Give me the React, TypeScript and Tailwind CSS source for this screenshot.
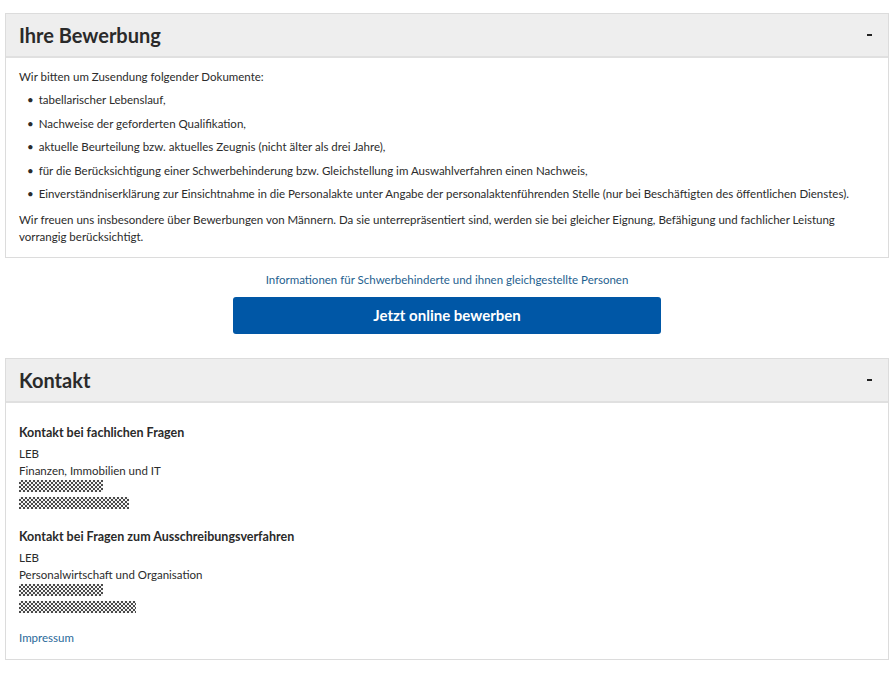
import React from 'react';

const font = { fontFamily: 'Lato, "Open Sans", "Noto Sans", sans-serif' };

function Redacted({ width }: { width: number }) {
  // masked contact line (phone / mail)
  return (
    <div
      className="h-[12px] bg-[repeating-conic-gradient(#4a4a4a_0_25%,#f4f4f4_0_50%)] bg-[length:4px_4px]"
      style={{ width }}
    />
  );
}

function Panel({ title, children }: { title: string; children: React.ReactNode }) {
  return (
    <section className="border border-[#dcdcdc] bg-white">
      <div className="flex h-[44px] items-center justify-between border-b-2 border-[#e0e0e0] bg-[#eeeeee] pl-[13px] pr-[16px]">
        <h2 className="text-[20px] font-bold text-[#2a2a2a]">{title}</h2>
        <span className="block h-[2px] w-[5px] bg-[#222]" />
      </div>
      {children}
    </section>
  );
}

const documents = [
  'tabellarischer Lebenslauf,',
  'Nachweise der geforderten Qualifikation,',
  'aktuelle Beurteilung bzw. aktuelles Zeugnis (nicht älter als drei Jahre),',
  'für die Berücksichtigung einer Schwerbehinderung bzw. Gleichstellung im Auswahlverfahren einen Nachweis,',
  'Einverständniserklärung zur Einsichtnahme in die Personalakte unter Angabe der personalaktenführenden Stelle (nur bei Beschäftigten des öffentlichen Dienstes).',
];

function ContactBlock({ heading, unit, widths }: { heading: string; unit: string; widths: number[] }) {
  return (
    <div>
      <h3 className="mb-[4px] text-[12.5px] font-bold leading-[17px] text-[#2a2a2a]">{heading}</h3>
      <p className="text-[11.5px] leading-[17px]">LEB</p>
      <p className="text-[11.5px] leading-[17px]">{unit}</p>
      <div className="mt-[1px] flex flex-col gap-[5px]">
        {widths.map((w, i) => (
          <Redacted key={i} width={w} />
        ))}
      </div>
    </div>
  );
}

export default function App() {
  return (
    <div className="min-h-[680px] bg-white pl-[5px] pr-[7px] pt-[13px] text-[#2b2b2b]" style={font}>
      <Panel title="Ihre Bewerbung">
        <div className="px-[13px] pb-[12px] pt-[10px] text-[11.5px] leading-[17px]">
          <p>Wir bitten um Zusendung folgender Dokumente:</p>
          <ul className="mt-[6px] flex flex-col gap-[6.5px] pl-[8px]">
            {documents.map((d) => (
              <li key={d} className="flex">
                <span className="mr-[5px]">•</span>
                <span>{d}</span>
              </li>
            ))}
          </ul>
          <p className="mt-[9px]">
            Wir freuen uns insbesondere über Bewerbungen von Männern. Da sie unterrepräsentiert sind, werden sie bei
            gleicher Eignung, Befähigung und fachlicher Leistung vorrangig berücksichtigt.
          </p>
        </div>
      </Panel>

      <div className="flex flex-col items-center pt-[13px]">
        <a href="#" className="text-[11.5px] leading-[17px] text-[#1f5f8f]">
          Informationen für Schwerbehinderte und ihnen gleichgestellte Personen
        </a>
        <button className="mt-[9px] h-[37px] w-[428px] rounded-[3px] bg-[#0057a6] text-[15px] font-bold text-white">
          Jetzt online bewerben
        </button>
      </div>

      <div className="pt-[24px]">
        <Panel title="Kontakt">
          <div className="flex flex-col px-[13px] pb-[13px] pt-[21px]">
            <ContactBlock heading="Kontakt bei fachlichen Fragen" unit="Finanzen, Immobilien und IT" widths={[84, 110]} />
            <div className="mt-[19px]">
              <ContactBlock
                heading="Kontakt bei Fragen zum Ausschreibungsverfahren"
                unit="Personalwirtschaft und Organisation"
                widths={[84, 117]}
              />
            </div>
            <a href="#" className="mt-[16px] text-[11.5px] leading-[17px] text-[#2a6a9a]">
              Impressum
            </a>
          </div>
        </Panel>
      </div>
    </div>
  );
}
